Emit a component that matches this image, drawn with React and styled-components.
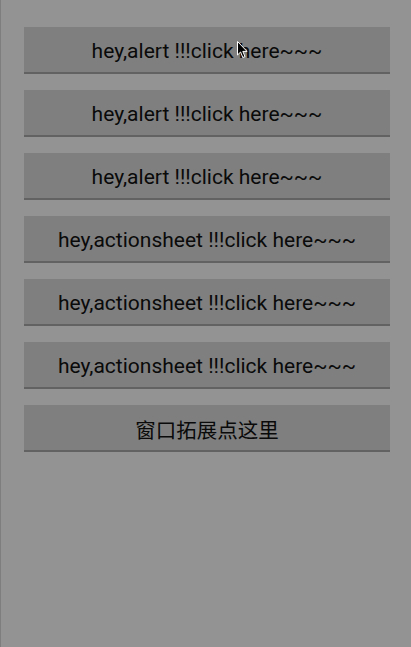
import React from 'react';
import styled, { createGlobalStyle } from 'styled-components';

const GlobalStyle = createGlobalStyle`
  html, body {
    margin: 0;
    padding: 0;
    background: #939393;
  }
`;

const Screen = styled.div`
  position: relative;
  box-sizing: border-box;
  width: 411px;
  height: 647px;
  background: #939393;
  border-left: 1px solid #7e7e7e;
  padding: 27px 21px 0 23px;
  display: flex;
  flex-direction: column;
  gap: 16px;
  font-family: Roboto, "Noto Sans CJK SC", sans-serif;
`;

const ActionButton = styled.button`
  box-sizing: border-box;
  width: 100%;
  height: 47px;
  margin: 0;
  padding: 2px 0 0;
  border: none;
  border-bottom: 2px solid #626262;
  border-radius: 0;
  background: #7f7f7f;
  color: #0a0a0a;
  font-family: Roboto, "Noto Sans CJK SC", sans-serif;
  font-size: ${(p) => (p.$cjk ? '20.5px' : '21px')};
  display: flex;
  align-items: center;
  justify-content: center;
  cursor: pointer;
`;

const Pointer = styled.svg`
  position: absolute;
  left: 236px;
  top: 41px;
  pointer-events: none;
`;

const labels = [
  'hey,alert !!!click here~~~',
  'hey,alert !!!click here~~~',
  'hey,alert !!!click here~~~',
  'hey,actionsheet !!!click here~~~',
  'hey,actionsheet !!!click here~~~',
  'hey,actionsheet !!!click here~~~',
];

const App = () => (
  <>
    <GlobalStyle />
    <Screen>
      {labels.map((label, i) => (
        <ActionButton key={i}>{label}</ActionButton>
      ))}
      <ActionButton $cjk>窗口拓展点这里</ActionButton>
      <Pointer width="12" height="18" viewBox="0 0 12 18">
        <path
          d="M0.5 0.5 L0.5 14 L3.6 11 L5.8 16.5 L8 15.6 L5.8 10.4 L10 10.4 Z"
          fill="#000"
          stroke="#fff"
          strokeWidth="1"
          strokeLinejoin="round"
        />
      </Pointer>
    </Screen>
  </>
);

export default App;
